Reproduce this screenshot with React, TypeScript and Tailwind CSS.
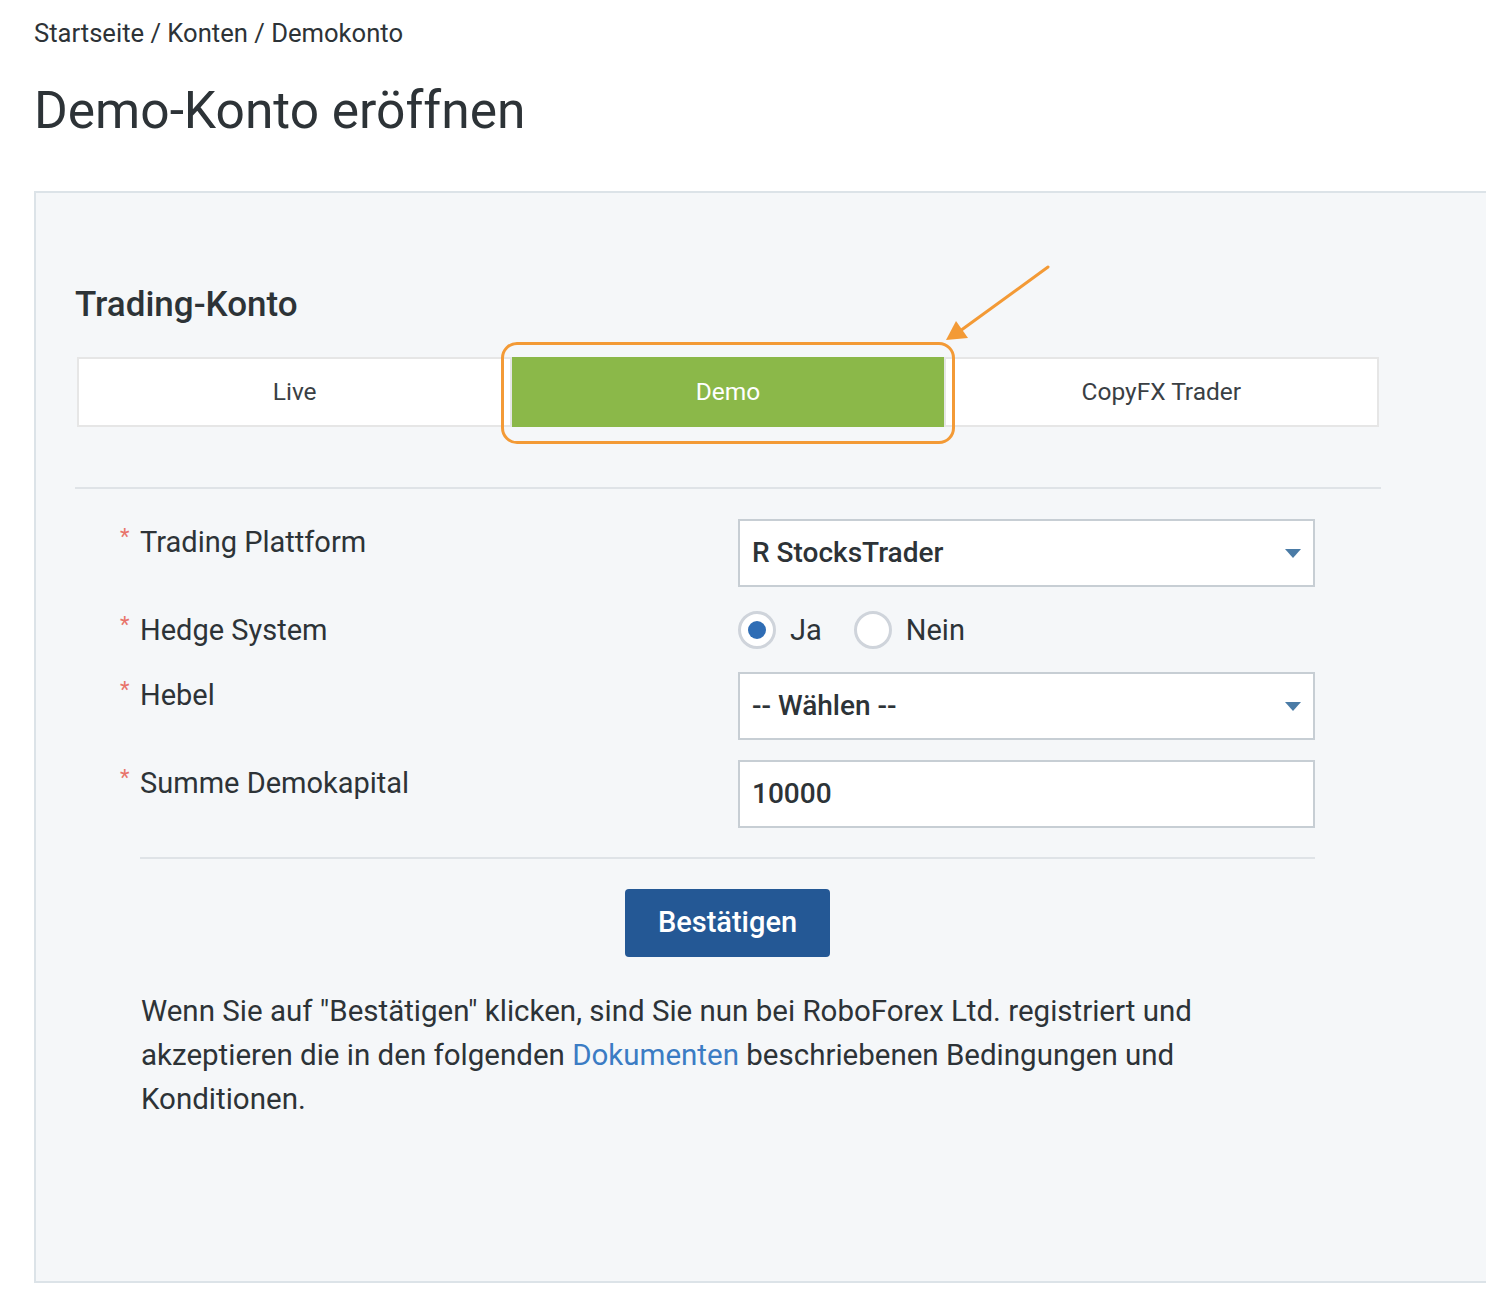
import React from 'react';

function Caret() {
    return (
        <svg width="16" height="9" viewBox="0 0 16 9" className="shrink-0">
            <path d="M0 0 H16 L8 9 Z" fill="#4a7ba6" />
        </svg>
    );
}

function Label({ text }: { text: string }) {
    return (
        <div className="text-[29px] leading-[46px]">
            <span className="-ml-[20px] inline-block w-[20px] pt-[3px] align-top text-[22px] leading-[30px] text-[#e8746a]">*</span>
            {text}
        </div>
    );
}

function Radio({ checked, label }: { checked?: boolean; label: string }) {
    return (
        <label className="flex items-center">
            <span className="flex h-[38px] w-[38px] items-center justify-center rounded-full border-[3px] border-[#cfd4db] bg-white">
                {checked && <span className="h-[18px] w-[18px] rounded-full bg-[#2f6db5]" />}
            </span>
            <span className="ml-[14px] text-[29px] leading-[46px]">{label}</span>
        </label>
    );
}

export default function App() {
    return (
        <div className="min-h-screen overflow-hidden bg-white font-['Roboto',sans-serif] text-[#2d3337]">
            <div className="pl-[34px] pt-[19px]">
                <nav className="text-[25.6px] leading-[28px]">Startseite / Konten / Demokonto</nav>
                <h1 className="mt-[34px] text-[51.5px] leading-[60px]">Demo-Konto eröffnen</h1>

                <section className="mt-[50px] w-[1470px] border-2 border-[#dce3e8] bg-[#f5f7f9] pb-[160px] pl-[39px] pt-[92px]">
                    <div className="w-[1306px]">
                        <h2 className="text-[35px] font-medium leading-[40px]">Trading-Konto</h2>

                        <div className="relative mx-[2px] mt-[32px] flex">
                            <div className="flex h-[70px] flex-1 items-center justify-center border-2 border-[#e6e6e6] bg-white text-[24.5px] text-[#3a3f44]">
                                Live
                            </div>
                            <div className="relative flex h-[70px] flex-1 items-center justify-center bg-[#8bb849] text-[24.5px] text-white">
                                Demo
                                <div className="absolute -bottom-[17px] -left-[11px] -right-[11px] -top-[15px] rounded-[16px] border-[3px] border-[#f39a36]" />
                            </div>
                            <div className="flex h-[70px] flex-1 items-center justify-center border-2 border-[#e6e6e6] bg-white text-[24.5px] text-[#3a3f44]">
                                CopyFX Trader
                            </div>
                            <svg width="112" height="84" viewBox="0 0 112 84" className="absolute left-[863px] top-[-95px]">
                                <line x1="108" y1="5" x2="20" y2="69" stroke="#f39a36" strokeWidth="3" strokeLinecap="round" />
                                <path d="M6 78 L16 59 L28 76 Z" fill="#f39a36" />
                            </svg>
                        </div>

                        <div className="mt-[60px] h-[2px] bg-[#dfe3e7]" />

                        <div className="ml-[65px] mt-[30px] w-[1175px]">
                            <div className="grid grid-cols-[598px_577px]">
                                <Label text="Trading Plattform" />
                                <div className="flex h-[68px] items-center justify-between border-2 border-[#c7ced4] bg-white pl-[12px] pr-[12px] text-[28px] font-medium">
                                    <span>R StocksTrader</span>
                                    <Caret />
                                </div>
                            </div>

                            <div className="mt-[20px] grid grid-cols-[598px_577px]">
                                <Label text="Hedge System" />
                                <div className="flex h-[46px] items-center gap-[32px]">
                                    <Radio checked label="Ja" />
                                    <Radio label="Nein" />
                                </div>
                            </div>

                            <div className="mt-[19px] grid grid-cols-[598px_577px]">
                                <Label text="Hebel" />
                                <div className="flex h-[68px] items-center justify-between border-2 border-[#c7ced4] bg-white pl-[12px] pr-[12px] text-[28px] font-medium">
                                    <span>-- Wählen --</span>
                                    <Caret />
                                </div>
                            </div>

                            <div className="mt-[20px] grid grid-cols-[598px_577px]">
                                <Label text="Summe Demokapital" />
                                <div className="flex h-[68px] items-center border-2 border-[#c7ced4] bg-white pl-[12px] text-[28px] font-medium">
                                    10000
                                </div>
                            </div>

                            <div className="mt-[29px] h-[2px] bg-[#dfe3e7]" />

                            <button className="mx-auto mt-[30px] flex h-[68px] w-[205px] items-center justify-center rounded-[4px] bg-[#245895] text-[29px] font-medium text-white">
                                Bestätigen
                            </button>

                            <p className="mt-[32px] max-w-[1100px] pl-[1px] text-[29.5px] leading-[44px]">
                                Wenn Sie auf "Bestätigen" klicken, sind Sie nun bei RoboForex Ltd. registriert und akzeptieren die in den folgenden{' '}
                                <a className="text-[#3b7cc4]">Dokumenten</a> beschriebenen Bedingungen und Konditionen.
                            </p>
                        </div>
                    </div>
                </section>
            </div>
        </div>
    );
}
